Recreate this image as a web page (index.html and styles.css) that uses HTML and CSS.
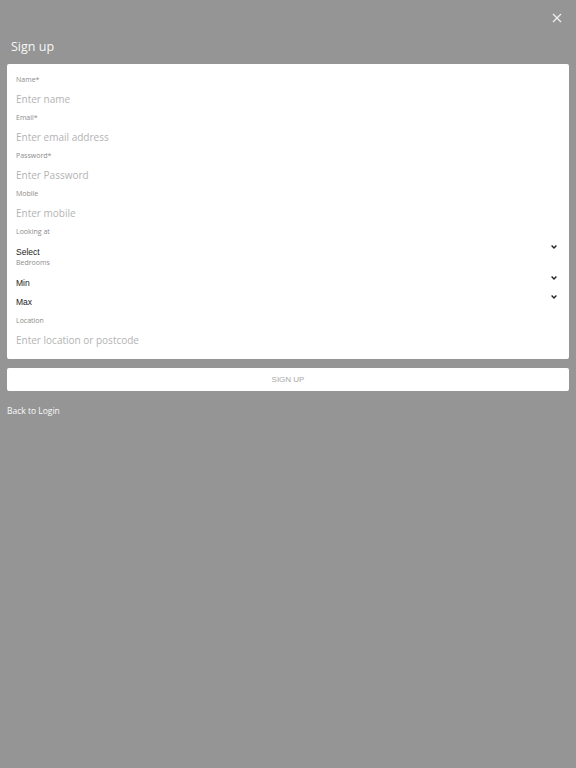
FILE: index.html
```html
<!DOCTYPE html>
<html lang="en">
<head>
  <meta charset="UTF-8">
  <meta name="viewport" content="width=device-width, initial-scale=1.0">
  <title>Sign up</title>
  <link rel="stylesheet" href="styles.css">
</head>
<body>

  <header class="top-bar">
    <button class="close-btn" aria-label="Close">
      <svg width="10" height="10" viewBox="0 0 10 10">
        <path d="M1 1 L9 9 M9 1 L1 9" stroke="#f2f2f2" stroke-width="1.2" fill="none"/>
      </svg>
    </button>
  </header>

  <h1 class="page-title">Sign up</h1>

  <!-- signup form card -->
  <form class="signup-card">
    <label class="field-label">Name*</label>
    <input class="field-input" type="text" placeholder="Enter name">

    <label class="field-label">Email*</label>
    <input class="field-input" type="email" placeholder="Enter email address">

    <label class="field-label">Password*</label>
    <input class="field-input" type="password" placeholder="Enter Password">

    <label class="field-label">Mobile</label>
    <input class="field-input" type="tel" placeholder="Enter mobile">

    <label class="field-label">Looking at</label>
    <div class="select-row">
      <span>Select</span>
      <svg class="chevron" width="6" height="4" viewBox="0 0 6 4">
        <path d="M0.6 0.6 L3 3 L5.4 0.6" stroke="#222" stroke-width="1.4" fill="none"/>
      </svg>
    </div>

    <label class="field-label">Bedrooms</label>
    <div class="select-row">
      <span>Min</span>
      <svg class="chevron" width="6" height="4" viewBox="0 0 6 4">
        <path d="M0.6 0.6 L3 3 L5.4 0.6" stroke="#222" stroke-width="1.4" fill="none"/>
      </svg>
    </div>
    <div class="select-row">
      <span>Max</span>
      <svg class="chevron" width="6" height="4" viewBox="0 0 6 4">
        <path d="M0.6 0.6 L3 3 L5.4 0.6" stroke="#222" stroke-width="1.4" fill="none"/>
      </svg>
    </div>

    <label class="field-label location-label">Location</label>
    <input class="field-input" type="text" placeholder="Enter location or postcode">
  </form>

  <button class="signup-btn" type="button">SIGN UP</button>

  <a class="back-link" href="#">Back to Login</a>

</body>
</html>
```

FILE: styles.css
```css
:root {
  --bg: #959595;
  --label: #8c8c8c;
  --placeholder: #b3b3b3;
}

html {
  background: var(--bg);
}

body {
  margin: 0;
  padding: 0 7px;
  font-family: "Open Sans", "Noto Sans", sans-serif;
  color: #fff;
}

.top-bar {
  display: flex;
  justify-content: flex-end;
  height: 30px;
  padding-top: 7px;
  box-sizing: border-box;
}

.close-btn {
  background: none;
  border: 0;
  padding: 0;
  margin-right: 7px;
  width: 10px;
  height: 10px;
  display: flex;
  margin-top: 6px;
}

.page-title {
  margin: 0;
  padding-left: 4px;
  font-size: 12.5px;
  font-weight: 400;
  line-height: 34px;
  color: #f7f7f7;
}

/* Form card */
.signup-card {
  display: flex;
  flex-direction: column;
  background: #fff;
  border-radius: 2px;
  padding: 10px 12px 6px 9px;
}

.field-label {
  font-size: 7px;
  line-height: 12px;
  color: var(--label);
}

.field-input {
  border: 0;
  outline: none;
  padding: 0;
  height: 26px;
  font-family: inherit;
  font-size: 10px;
  color: #333;
  background: transparent;
}

.field-input::placeholder {
  color: var(--placeholder);
}

.select-row {
  display: flex;
  justify-content: space-between;
  height: 19px;
  font-family: "Liberation Sans", Arial, sans-serif;
  font-size: 8.5px;
  color: #1c1c1c;
}

.select-row span {
  align-self: flex-end;
  line-height: 9px;
}

.chevron {
  margin-top: 7px;
}

.location-label {
  margin-top: 8px;
}

.signup-btn {
  display: block;
  width: 100%;
  height: 23px;
  margin-top: 9px;
  border: 0;
  border-radius: 2px;
  background: #fff;
  font-family: "Liberation Sans", Arial, sans-serif;
  font-size: 8px;
  color: #a8a8a8;
}

.back-link {
  display: inline-block;
  margin-top: 14px;
  font-size: 8.5px;
  color: #fafafa;
  text-decoration: none;
}
```
